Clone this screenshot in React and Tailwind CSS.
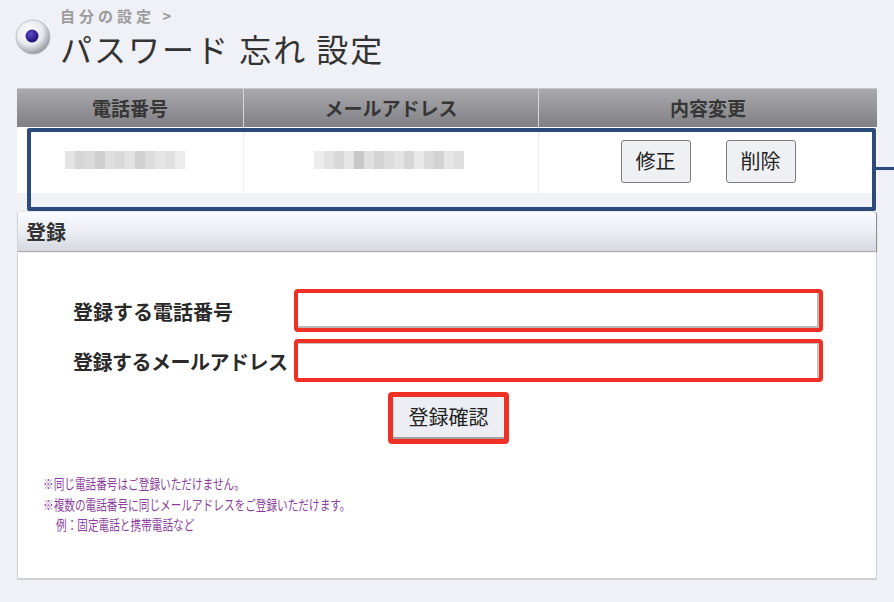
import React from 'react';

const jp = "font-['Noto_Sans_CJK_JP','Noto_Sans',sans-serif]";

function RadioIcon() {
    return (
        <svg width="36" height="36" viewBox="0 0 36 36">
            <defs>
                <radialGradient id="ball" cx="40%" cy="35%" r="65%">
                    <stop offset="0%" stopColor="#ffffff" />
                    <stop offset="60%" stopColor="#e8e9ee" />
                    <stop offset="100%" stopColor="#9a9ca6" />
                </radialGradient>
                <radialGradient id="dot" cx="40%" cy="35%" r="70%">
                    <stop offset="0%" stopColor="#5b4bc8" />
                    <stop offset="100%" stopColor="#1a0c6e" />
                </radialGradient>
            </defs>
            <circle cx="18" cy="18" r="17" fill="url(#ball)" stroke="#b4b6be" strokeWidth="0.8" />
            <circle cx="17" cy="17" r="6.5" fill="url(#dot)" />
        </svg>
    );
}

// blurred placeholder blocks
function Blur({ cells }) {
    return (
        <div className="flex items-center h-[18px]">
            {cells.map((c, i) => (
                <div key={i} className="w-[10px] h-[18px]" style={{ background: c }} />
            ))}
        </div>
    );
}

export default function App() {
    return (
        <div className={`relative w-[894px] h-[602px] bg-[#eff1f6] overflow-hidden ${jp}`}>
            {/* Title */}
            <div className="flex pl-[15px] h-[88px]">
                <div className="mt-[19px]">
                    <RadioIcon />
                </div>
                <div className="ml-[9px] flex flex-col">
                    <div className="mt-[7px] h-[17px] leading-[17px] text-[15px] font-bold text-[#9c9c9c] tracking-[4px]">
                        自分の設定 &gt;
                    </div>
                    <div className="mt-[5px] h-[38px] leading-[38px] text-[32px] text-[#333] tracking-[2px]">
                        パスワード 忘れ 設定
                    </div>
                </div>
            </div>

            {/* Table */}
            <div className="mx-[17px] w-[860px]">
                <div className="grid grid-cols-[227px_295px_338px] h-[39px] bg-gradient-to-b from-[#aaaaae] to-[#808084] border-t border-[#c8c8cc]">
                    <div className="flex items-center justify-center border-r border-[#d8d8dc] text-[19px] font-bold text-[#363636]">電話番号</div>
                    <div className="flex items-center justify-center border-r border-[#d8d8dc] text-[19px] font-bold text-[#363636]">メールアドレス</div>
                    <div className="flex items-center justify-center text-[19px] font-bold text-[#363636]">内容変更</div>
                </div>
                <div className="grid grid-cols-[227px_295px_338px] h-[66px] bg-white">
                    <div className="flex items-center justify-center border-r border-[#eceef3] pl-[40px] pr-[50px]">
                        <Blur cells={['#e4e4e4', '#d6d6d6', '#dadada', '#cfcfcf', '#dedede', '#d8d8d8', '#e2e2e2', '#d0d0d0', '#dcdcdc', '#e6e6e6', '#e0e0e0', '#ececec']} />
                    </div>
                    <div className="flex items-center justify-center border-r border-[#eceef3] pr-[5px]">
                        <Blur cells={['#ececec', '#e2e2e2', '#d8d8d8', '#e6e6e6', '#c8c8c8', '#e0e0e0', '#d4d4d4', '#dcdcdc', '#e4e4e4', '#d6d6d6', '#e8e8e8', '#dadada', '#d2d2d2', '#e6e6e6', '#dedede']} />
                    </div>
                    <div className="flex items-center justify-center gap-[35px] pt-[2px]">
                        <button className="w-[70px] h-[43px] bg-[#eff0f4] border border-[#7d7d7d] rounded-[3px] text-[20px] text-[#222]">修正</button>
                        <button className="w-[70px] h-[43px] bg-[#eff0f4] border border-[#7d7d7d] rounded-[3px] text-[20px] text-[#222]">削除</button>
                    </div>
                </div>
            </div>

            {/* Registration section */}
            <div className="mx-[17px] mt-[19px] w-[860px] h-[368px] bg-white border-x border-b-2 border-[#cfd1d6] flex flex-col">
                <div className="h-[40px] bg-gradient-to-b from-[#fafbff] via-[#eceef4] to-[#d6d8e0] border-b border-[#a8aab0] rounded-tr-[4px] flex items-center pl-[8px] text-[20px] font-bold text-[#333] shadow-[1px_0_1px_#888]">
                    登録
                </div>
                <div className="flex flex-col pl-[55px]">
                    <div className="flex items-center mt-[37px] h-[43px]">
                        <div className="w-[221px] text-[20px] font-bold text-[#2a2a2a] pt-[2px] whitespace-nowrap">登録する電話番号</div>
                        <div className="w-[529px] h-[43px] border-[4px] border-[#ee3124] rounded-[4px] bg-white">
                            <div className="w-full h-full border-b-[2px] border-r-[2px] border-[#b8b8b8]" />
                        </div>
                    </div>
                    <div className="flex items-center mt-[7px] h-[43px]">
                        <div className="w-[221px] text-[20px] font-bold text-[#2a2a2a] pt-[2px] whitespace-nowrap tracking-[-0.5px]">登録するメールアドレス</div>
                        <div className="w-[529px] h-[43px] border-[4px] border-[#ee3124] rounded-[4px] bg-white">
                            <div className="w-full h-full border-t-[1px] border-r-[2px] border-[#c4c4c4]" />
                        </div>
                    </div>
                    <div className="flex mt-[10px] pl-[315px]">
                        <div className="w-[121px] h-[52px] border-[5px] border-[#ee3124] rounded-[4px] bg-white flex">
                            <button className="w-full h-full bg-[#eceef3] border-b-[2px] border-[#a0a0a0] text-[20px] text-[#222] leading-none">登録確認</button>
                        </div>
                    </div>
                    <div className="mt-[29px] ml-[-30px] text-[14px] leading-[20.5px] text-[#8c3f9c] flex flex-col">
                        <div className="h-[20.5px] w-[220px]">
                            <div className="origin-left scale-x-[0.76] whitespace-nowrap">※同じ電話番号はご登録いただけません。</div>
                        </div>
                        <div className="h-[20.5px] w-[320px]">
                            <div className="origin-left scale-x-[0.76] whitespace-nowrap">※複数の電話番号に同じメールアドレスをご登録いただけます。</div>
                        </div>
                        <div className="h-[20.5px] w-[320px]">
                            <div className="origin-left scale-x-[0.76] whitespace-nowrap">　 例：固定電話と携帯電話など</div>
                        </div>
                    </div>
                </div>
            </div>

            {/* Annotation overlay */}
            <div className="absolute left-[27px] top-[128px] w-[849px] h-[83px] border-[4px] border-[#2c4a7c] rounded-[2px]" />
            <div className="absolute left-[876px] top-[167px] w-[18px] h-[3px] bg-[#2c4a7c]" />
        </div>
    );
}
